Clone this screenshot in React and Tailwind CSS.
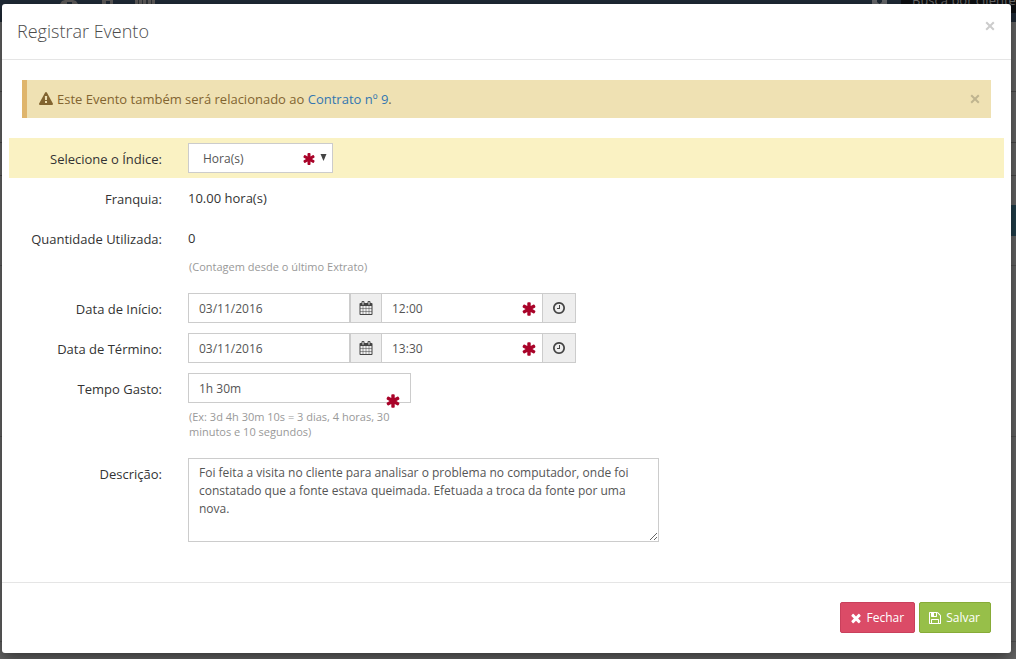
const paths = {
  asterisk: 'M1546 1050q46 26 59.5 77.5t-12.5 97.5l-64 110q-26 46-77.5 59.5t-97.5-12.5l-266-153v307q0 52-38 90t-90 38h-128q-52 0-90-38t-38-90v-307l-266 153q-46 26-97.5 12.5t-77.5-59.5l-64-110q-26-46-12.5-97.5t59.5-77.5l266-154-266-154q-46-26-59.5-77.5t12.5-97.5l64-110q26-46 77.5-59.5t97.5 12.5l266 153v-307q0-52 38-90t90-38h128q52 0 90 38t38 90v307l266-153q46-26 97.5-12.5t77.5 59.5l64 110q26 46 12.5 97.5t-59.5 77.5l-266 154z',
  warning: 'M1024 1375v-190q0-14-9.5-23.5t-22.5-9.5h-192q-13 0-22.5 9.5t-9.5 23.5v190q0 14 9.5 23.5t22.5 9.5h192q13 0 22.5-9.5t9.5-23.5zm-2-374l18-459q0-12-10-19-13-11-24-11h-220q-11 0-24 11-10 7-10 21l17 457q0 10 10 16.5t24 6.5h185q14 0 23.5-6.5t10.5-16.5zm-14-934l768 1408q35 63-2 126-17 29-46.5 46t-63.5 17h-1536q-34 0-63.5-17t-46.5-46q-37-63-2-126l768-1408q17-31 47-49t65-18 65 18 47 49z',
  calendar: 'M192 1664h288v-288h-288v288zm352 0h320v-288h-320v288zm-352-352h288v-320h-288v320zm352 0h320v-320h-320v320zm-352-384h288v-288h-288v288zm736 736h320v-288h-320v288zm-384-736h320v-288h-320v288zm768 736h288v-288h-288v288zm-384-352h320v-320h-320v320zm-352-864v-288q0-13-9.5-22.5t-22.5-9.5h-64q-13 0-22.5 9.5t-9.5 22.5v288q0 13 9.5 22.5t22.5 9.5h64q13 0 22.5-9.5t9.5-22.5zm736 864h288v-320h-288v320zm-384-384h320v-288h-320v288zm384 0h288v-288h-288v288zm32-480v-288q0-13-9.5-22.5t-22.5-9.5h-64q-13 0-22.5 9.5t-9.5 22.5v288q0 13 9.5 22.5t22.5 9.5h64q13 0 22.5-9.5t9.5-22.5zm384-64v1280q0 52-38 90t-90 38h-1408q-52 0-90-38t-38-90v-1280q0-52 38-90t90-38h128v-96q0-66 47-113t113-47h64q66 0 113 47t47 113v96h384v-96q0-66 47-113t113-47h64q66 0 113 47t47 113v96h128q52 0 90 38t38 90z',
  clock: 'M1024 544v448q0 14-9 23t-23 9h-320q-14 0-23-9t-9-23v-64q0-14 9-23t23-9h224v-352q0-14 9-23t23-9h64q14 0 23 9t9 23zm416 352q0-148-73-273t-198-198-273-73-273 73-198 198-73 273 73 273 198 198 273 73 273-73 198-198 73-273zm224 0q0 209-103 385.5t-279.5 279.5-385.5 103-385.5-103-279.5-279.5-103-385.5 103-385.5 279.5-279.5 385.5-103 385.5 103 279.5 279.5 103 385.5z',
  save: 'M512 1536h768v-384h-768v384zm896 0h128v-896q0-14-10-38.5t-20-34.5l-281-281q-10-10-34-20t-39-10v416q0 40-28 68t-68 28h-576q-40 0-68-28t-28-68v-416h-128v1280h128v-416q0-40 28-68t68-28h832q40 0 68 28t28 68v416zm-384-928v-320q0-13-9.5-22.5t-22.5-9.5h-192q-13 0-22.5 9.5t-9.5 22.5v320q0 13 9.5 22.5t22.5 9.5h192q13 0 22.5-9.5t9.5-22.5zm640 32v928q0 40-28 68t-68 28h-1344q-40 0-68-28t-28-68v-1344q0-40 28-68t68-28h928q40 0 88 20t76 48l280 280q28 28 48 76t20 88z',
  times: 'M1490 1322q0 40-28 68l-136 136q-28 28-68 28t-68-28l-294-294-294 294q-28 28-68 28t-68-28l-136-136q-28-28-28-68t28-68l294-294-294-294q-28-28-28-68t28-68l136-136q28-28 68-28t68 28l294 294 294-294q28-28 68-28t68 28l136 136q28 28 28 68t-28 68l-294 294 294 294q28 28 28 68z',
};

function Icon({ name, className = 'size-3.5' }) {
  return (
    <svg viewBox="0 0 1792 1792" fill="currentColor" aria-hidden="true" className={`shrink-0 ${className}`}>
      <path d={paths[name]} />
    </svg>
  );
}

function CloseButton({ label, className }) {
  return (
    <button type="button" aria-label={label} className={`flex size-3 items-center justify-center ${className}`}>
      <svg viewBox="0 0 10 10" className="size-2.5" fill="none" stroke="currentColor" strokeWidth="2" aria-hidden="true">
        <path d="M1.2 1.2 8.8 8.8M8.8 1.2 1.2 8.8" />
      </svg>
    </button>
  );
}

function Required({ className }) {
  return <Icon name="asterisk" className={`pointer-events-none absolute text-[#a90329] ${className}`} />;
}

function Row({ label, htmlFor, highlight, className = '', children }) {
  const Tag = htmlFor ? 'label' : 'span';
  return (
    <div className={`flex gap-[26px] py-[5px] ${highlight ? 'bg-[#faf2c3]' : ''} ${className}`}>
      <Tag htmlFor={htmlFor} className="w-[153px] shrink-0 pt-[7px] text-right leading-[18px] text-[#333]">
        {label}
      </Tag>
      <div className="min-w-0 flex-1">{children}</div>
    </div>
  );
}

const field = 'h-[30px] border border-[#ccc] bg-white px-2.5 text-[12px] text-[#555] outline-none';
const addon = 'flex h-[30px] items-center justify-center border-y border-r border-[#ccc] bg-[#eee] text-[#444]';
const help = 'pl-px text-[11px] leading-[15px] text-[#999]';

function DateTimeRow({ id, label, date, time }) {
  return (
    <Row label={label} htmlFor={`${id}-data`}>
      <div className="flex">
        <input id={`${id}-data`} defaultValue={date} className={`w-[162px] ${field}`} />
        <button type="button" aria-label={`${label} calendário`} className={`w-8 border-l ${addon}`}>
          <Icon name="calendar" />
        </button>
        <div className="relative">
          <input aria-label={`${label} hora`} defaultValue={time} className={`w-[161px] border-l-0 ${field}`} />
          <Required className="right-1.5 top-2 size-4" />
        </div>
        <button type="button" aria-label={`${label} relógio`} className={`w-[33px] ${addon}`}>
          <Icon name="clock" />
        </button>
      </div>
    </Row>
  );
}

function PageBehind() {
  return (
    <div aria-hidden="true" className="absolute inset-0 flex flex-col overflow-hidden bg-[#676767]">
      <div className="flex h-[22px] items-start bg-[#1f2a36] text-[#6b6b6b]">
        <svg viewBox="0 0 100 4" className="ml-[60px] h-1 w-[100px]" fill="#5c5a59">
          <path d="M0 4 2 1 5 0h8l3 1 2 3h-6V2H7v2zM42 0h11v4h-3V1h-4v3h-4zM75 0h20v4H75z" />
          <path d="M78 0h1v4h-1zM82 0h1v4h-1zM86 0h2v4h-2zM91 0h1v4h-1z" fill="#2e3338" />
        </svg>
        <svg viewBox="0 0 15 4" className="ml-auto h-1 w-[15px]">
          <path d="M0 0h15v4H0z" fill="#66686b" />
          <path d="M5 0h5v2L7.500 4 5 2z" fill="#1f2a36" />
        </svg>
        <div className="ml-3.5 h-[13px] w-[115px] bg-[#0d0f12] pl-[11px]">
          <p className="-mt-2 whitespace-nowrap text-[13px] leading-[16px]">Busca por cliente</p>
        </div>
      </div>
      <div className="h-[70px] border-b border-[#4a4a4a]" />
      <div className="h-[51px] border-b border-[#4a4a4a]" />
      <div className="h-[33px] border-b border-[#4a4a4a]" />
      <div className="ml-auto mt-[29px] h-[31px] w-1/2 bg-[#213f4b]" />
      <div className="h-[30px] border-b border-[#555]" />
      <div className="h-[171px] border-b border-[#555]" />
      <div className="h-[205px] border-b border-[#555]" />
    </div>
  );
}

export default function App() {
  return (
    <div className="relative min-h-screen overflow-hidden pl-0.5 pr-[5px] pt-1 pb-1.5 font-['Open_Sans',sans-serif] text-[13px] text-[#333]">
      <PageBehind />
      <main role="dialog" aria-labelledby="titulo" className="relative rounded-[3px] bg-white shadow-[0_5px_15px_rgba(0,0,0,0.5)]">
        <header className="flex justify-between border-b border-[#e5e5e5] px-[15px] pb-[15px] pt-3.5">
          <h1 id="titulo" className="text-[18px] font-light leading-[26px] text-[#4c4c4c]">Registrar Evento</h1>
          <CloseButton label="Fechar janela" className="mt-0.5 text-[#ccc]" />
        </header>

        <form>
          <div className="pb-[35px] pt-5">
            <div className="ml-5 mr-5 flex h-[38px] items-center border-l-[5px] border-[#dfb56c] bg-[#efe1b3] pl-3 pr-2.5 text-[#826430]">
              <Icon name="warning" />
              <p className="ml-1 flex-1 pt-0.5">
                Este Evento também será relacionado ao <a href="#contrato" className="text-[#3276b1]">Contrato nº 9</a>.
              </p>
              <CloseButton label="Fechar aviso" className="text-[#bfb48f]" />
            </div>

            <div className="ml-[7px] mr-[7px] mt-5">
              <Row label="Selecione o Índice:" htmlFor="indice" highlight>
                <div className="relative w-[145px]">
                  <select id="indice" className={`w-full appearance-none pl-3.5 pt-px ${field}`}>
                    <option>Hora(s)</option>
                  </select>
                  <Required className="right-[17px] top-[9px] size-3.5" />
                  <svg viewBox="0 0 7 7" className="pointer-events-none absolute right-1.5 top-[11px] size-[7px]" aria-hidden="true">
                    <path d="M0.500 0h6L3.500 7z" fill="#444" />
                  </svg>
                </div>
              </Row>
              <Row label="Franquia:">
                <p className="py-1.5 leading-[18px]">10.00 hora(s)</p>
              </Row>
              <Row label="Quantidade Utilizada:">
                <p className="py-1.5 leading-[18px]">0</p>
                <p className={`pb-[9px] pt-1.5 ${help}`}>(Contagem desde o último Extrato)</p>
              </Row>
              <DateTimeRow id="inicio" label="Data de Início:" date="03/11/2016" time="12:00" />
              <DateTimeRow id="termino" label="Data de Término:" date="03/11/2016" time="13:30" />
              <Row label="Tempo Gasto:" htmlFor="tempo">
                <div className="relative w-[223px]">
                  <input id="tempo" defaultValue="1h 30m" className={`w-full ${field}`} />
                  <Required className="right-2.5 top-5 size-4" />
                  <p className={`mb-px mt-1.5 pr-4 ${help}`}>
                    (Ex: 3d 4h 30m 10s = 3 dias, 4 horas, 30 minutos e 10 segundos)
                  </p>
                </div>
              </Row>
              <Row label="Descrição:" htmlFor="descricao" className="mt-2">
                <textarea
                  id="descricao"
                  className="block h-[84px] w-[471px] max-w-full resize border border-[#ccc] px-2.5 py-[5px] text-[12px] leading-[18px] text-[#555] outline-none"
                  defaultValue="Foi feita a visita no cliente para analisar o problema no computador, onde foi constatado que a fonte estava queimada. Efetuada a troca da fonte por uma nova."
                />
              </Row>
            </div>
          </div>

          <footer className="flex justify-end gap-1 border-t border-[#e5e5e5] px-5 pb-5 pt-[19px] text-[12px] text-white">
            <button type="button" className="flex h-[31px] items-center gap-1 rounded-[2px] border border-[#c9405c] bg-[#db4b67] pl-2 pr-2.5">
              <Icon name="times" />
              Fechar
            </button>
            <button type="button" className="flex h-[31px] items-center gap-1 rounded-[2px] border border-[#87ab37] bg-[#97bf49] pl-2 pr-2.5">
              <Icon name="save" />
              Salvar
            </button>
          </footer>
        </form>
      </main>
    </div>
  );
}
